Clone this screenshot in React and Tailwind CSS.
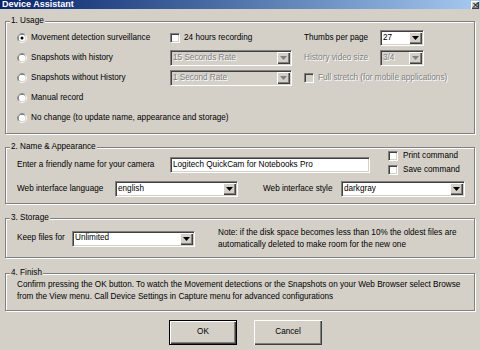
import React from 'react';

const sunken =
  'border border-t-[#808080] border-l-[#808080] border-r-white border-b-white shadow-[inset_1px_1px_0_#404040,inset_-1px_-1px_0_#d4d0c8]';
const raised =
  'bg-[#d4d0c8] shadow-[inset_1px_1px_0_#fff,inset_-1px_-1px_0_#404040,inset_-2px_-2px_0_#808080]';
const grayText = 'text-[#808080] [text-shadow:1px_1px_0_#fff]';

const Radio = ({ checked }) => (
  <svg width="10" height="10" viewBox="0 0 12 12" className="shrink-0">
    <circle cx="6" cy="6" r="5.5" fill="none" stroke="#fff" />
    <path d="M2.11 9.89 A5.5 5.5 0 0 1 9.89 2.11" fill="none" stroke="#808080" />
    <circle cx="6" cy="6" r="4.5" fill="none" stroke="#d4d0c8" />
    <path d="M2.82 9.18 A4.5 4.5 0 0 1 9.18 2.82" fill="none" stroke="#404040" />
    <circle cx="6" cy="6" r="4" fill="#fff" />
    {checked ? <circle cx="6" cy="6" r="1.8" fill="#000" /> : null}
  </svg>
);

const Check = ({ disabled }) => (
  <span className={`h-[10px] w-[10px] shrink-0 ${sunken} ${disabled ? 'bg-[#d4d0c8]' : 'bg-white'}`} />
);

const Arrow = ({ disabled }) => (
  <svg width="7" height="4" viewBox="0 0 7 4">
    <path d="M0 0 H7 L3.5 4 Z" fill={disabled ? '#808080' : '#000'} />
  </svg>
);

const Select = ({ value, width, disabled }) => (
  <div
    className={`flex h-[16px] shrink-0 items-stretch ${sunken} ${disabled ? 'bg-[#d4d0c8]' : 'bg-white'}`}
    style={{ width }}
  >
    <span className={`flex flex-1 items-center truncate pl-[2px] ${disabled ? grayText : ''}`}>{value}</span>
    <span className={`m-[1px] flex w-[13px] items-center justify-center ${raised}`}>
      <Arrow disabled={disabled} />
    </span>
  </div>
);

const Group = ({ title, className = '', children }) => (
  <fieldset
    className={`mx-[5px] border border-[#808080] shadow-[inset_1px_1px_0_#fff,1px_1px_0_#fff] ${className}`}
  >
    <legend className="ml-[4px] bg-[#d4d0c8] px-[1px] leading-[12px]">{title}</legend>
    {children}
  </fieldset>
);

const RadioRow = ({ checked, label, children }) => (
  <div className="flex h-[20px] items-center">
    <div className="flex w-[153px] shrink-0 items-center gap-[4px]">
      <Radio checked={checked} />
      <span className="whitespace-nowrap">{label}</span>
    </div>
    {children}
  </div>
);

export default function App() {
  return (
    <div className="h-[350px] w-[480px] overflow-hidden bg-[#d4d0c8] font-['Liberation_Sans',Arial,sans-serif] text-[8.2px] text-black">
      <div className="flex h-[9px] items-center justify-between bg-gradient-to-r from-[#0a246a] to-[#a6caf0]">
        <span className="pl-[2px] text-[9px] font-bold leading-[9px] text-white">Device Assistant</span>
        <span className={`mr-[1px] flex h-[8px] w-[8px] items-center justify-center ${raised}`}>
          <svg width="5" height="4" viewBox="0 0 5 4">
            <path d="M0.5 0 L4.5 4 M4.5 0 L0.5 4" stroke="#000" strokeWidth="1" />
          </svg>
        </span>
      </div>

      <Group title="1. Usage" className="mt-[6px]">
        <div className="pb-[5px] pl-[11px] pt-[1px]">
          <RadioRow checked label="Movement detection surveillance">
            <div className="flex w-[134px] shrink-0 items-center gap-[4px]">
              <Check />
              <span>24 hours recording</span>
            </div>
            <span className="w-[76px] shrink-0">Thumbs per page</span>
            <Select value="27" width={44} />
          </RadioRow>
          <RadioRow label="Snapshots with history">
            <div className="w-[134px] shrink-0">
              <Select value="15 Seconds Rate" width={122} disabled />
            </div>
            <span className={`w-[76px] shrink-0 ${grayText}`}>History video size</span>
            <Select value="3/4" width={44} disabled />
          </RadioRow>
          <RadioRow label="Snapshots without History">
            <div className="w-[134px] shrink-0">
              <Select value="1 Second Rate" width={122} disabled />
            </div>
            <div className="flex items-center gap-[4px]">
              <Check disabled />
              <span className={grayText}>Full stretch (for mobile applications)</span>
            </div>
          </RadioRow>
          <RadioRow label="Manual record" />
          <RadioRow label="No change (to update name, appearance and storage)" />
        </div>
      </Group>

      <Group title="2. Name & Appearance" className="mt-[7px]">
        <div className="pb-[4px] pl-[11px] pt-[2px]">
          <div className="flex h-[20px] items-center">
            <span className="w-[153px] shrink-0">Enter a friendly name for your camera</span>
            <div className={`flex h-[16px] w-[200px] shrink-0 items-center bg-white pl-[2px] ${sunken}`}>
              Logitech QuickCam for Notebooks Pro
            </div>
            <div className="-mt-[4px] ml-[18px] flex flex-col">
              <div className="flex h-[14px] items-center gap-[5px]">
                <Check />
                <span>Print command</span>
              </div>
              <div className="flex h-[14px] items-center gap-[5px]">
                <Check />
                <span>Save command</span>
              </div>
            </div>
          </div>
          <div className="mt-[4px] flex h-[20px] items-center">
            <span className="w-[98px] shrink-0">Web interface language</span>
            <Select value="english" width={123} />
            <span className="ml-[25px] w-[78px] shrink-0">Web interface style</span>
            <Select value="darkgray" width={124} />
          </div>
        </div>
      </Group>

      <Group title="3. Storage" className="mt-[8px]">
        <div className="mb-[5px] flex h-[28px] items-center pl-[11px] pt-[1px]">
          <span className="w-[55px] shrink-0">Keep files for</span>
          <Select value="Unlimited" width={123} />
          <p className="ml-[23px] whitespace-nowrap leading-[12px]">
            Note: if the disk space becomes less than 10% the oldest files are
            <br />
            automatically deleted to make room for the new one
          </p>
        </div>
      </Group>

      <Group title="4. Finish" className="mt-[9px]">
        <p className="whitespace-nowrap pb-[7px] pl-[11px] leading-[12px]">
          Confirm pressing the OK button. To watch the Movement detections or the Snapshots on your Web Browser select Browse
          <br />
          from the View menu. Call Device Settings in Capture menu for advanced configurations
        </p>
      </Group>

      <div className="mt-[9px] flex gap-[17px] pl-[169px]">
        <button type="button" className="h-[25px] w-[68px] border border-black p-0">
          <span className={`flex h-full w-full items-center justify-center ${raised}`}>OK</span>
        </button>
        <button type="button" className={`flex h-[25px] w-[68px] items-center justify-center ${raised}`}>
          Cancel
        </button>
      </div>
    </div>
  );
}
